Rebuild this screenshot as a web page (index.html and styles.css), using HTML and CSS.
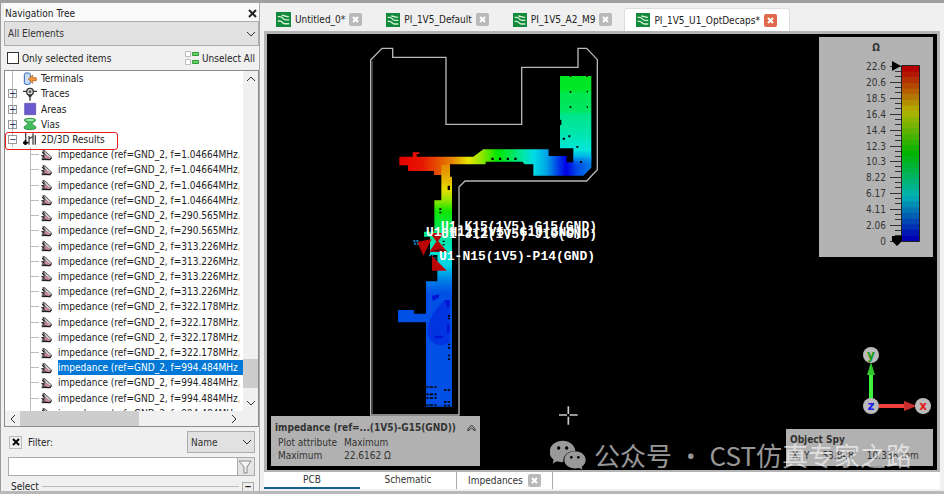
FILE: index.html
```
<!DOCTYPE html>
<html lang="en">
<head>
    <meta charset="UTF-8">
    <meta name="viewport" content="width=device-width, initial-scale=1.0">
    <title>PI_1V5_U1_OptDecaps</title>
    <link rel="stylesheet" href="styles.css">
</head>
<body>
    <!-- Shared icons -->
    <svg class="defs" width="0" height="0" aria-hidden="true">
        <symbol id="result" viewBox="0 0 36 36">
            <path d="M5 3l5 0 23 21-4 10-22-2-6-4 5-5-5-4 7-2-4-6z" fill="#5a5558"/>
            <path d="M8 5l22 19-2 3-13-9z" fill="#ddd"/>
            <path d="M11 17l16 9-2 5-14-5z" fill="#d487a8"/>
            <path d="M3 10l6 4M1 20l8 2M2 32h24l6-5" fill="none" stroke="#111" stroke-width="3"/>
        </symbol>
        <symbol id="doc" viewBox="0 0 42 42">
            <path d="M0 0h42v42H0z" fill="#128a3c"/>
            <path d="M5 13h6c8 0 8 9 15 9h11M5 25h5c8 0 8 8 15 8h12M16 9c8 0 9 4 20 4" fill="none" stroke="#d5f0d8" stroke-width="4"/>
        </symbol>
        <symbol id="cross" viewBox="0 0 13 13">
            <path d="M4 4l5 5M9 4l-5 5" stroke="#fff" stroke-width="2"/>
        </symbol>
        <symbol id="chevron" viewBox="0 0 10 10">
            <path d="M1 3l4 4 4-4" fill="none" stroke="currentColor"/>
        </symbol>
    </svg>

    <div class="app">
        <aside class="sidebar">
            <header class="panel-title">
                <span>Navigation Tree</span>
                <button class="plain" aria-label="Close panel"><svg width="9" height="9" viewBox="0 0 9 9"><path d="M1 1l7 7M8 1l-7 7" stroke="#222" stroke-width="2"/></svg></button>
            </header>
            <div class="select-wrap wide">
                <select aria-label="Elements"><option>All Elements</option></select>
                <svg width="10" height="10"><use href="#chevron"/></svg>
            </div>
            <div class="options">
                <label><input type="checkbox"> Only selected items</label>
                <button class="plain unselect">
                    <svg width="14" height="14" viewBox="0 0 14 14"><path d="M.5.5h5v5h-5zM.5 8.500h5v5h-5z" fill="#fff" stroke="#bbb"/><path d="M7.500 1.500h6v3h-6zM7.500 9.500h6v3h-6z" fill="#5fd35f" stroke="#2f9a3a"/></svg>
                    Unselect All
                </button>
            </div>

            <div class="tree-box">
                <div class="tree-view">
                    <ul class="tree">
                        <li class="node leaf"><i></i><svg width="14" height="14" viewBox="0 0 42 42"><rect x="4" y="3" width="18" height="34" rx="5" fill="#c9dcf5" stroke="#3565b5" stroke-width="3"/><path d="M40 17v9H29v8L16 21.500 29 9v8z" fill="#f0983c" stroke="#a85510" stroke-width="2"/></svg><span>Terminals</span></li>
                        <li class="node"><i>+</i><svg width="14" height="14" viewBox="0 0 42 42"><path d="M0 13h42M21 13v28M16 24l5 6 5-6" fill="none" stroke="#333" stroke-width="4"/><circle cx="21" cy="14" r="10" fill="#ddd" stroke="#333" stroke-width="4"/><circle cx="21" cy="14" r="4" fill="#555"/></svg><span>Traces</span></li>
                        <li class="node"><i>+</i><svg width="14" height="14" viewBox="0 0 42 42"><path d="M5 4h33v34H5z" fill="#6a5acd" stroke="#5346a8" stroke-width="2"/></svg><span>Areas</span></li>
                        <li class="node"><i>+</i><svg width="14" height="14" viewBox="0 0 42 42"><path d="M4 9C4 2 38 2 38 9c0 6-10 6-10 11s11 5 11 12c0 8-36 8-36 0 0-7 11-7 11-12S4 15 4 9z" fill="#42b95a" stroke="#217a35" stroke-width="2"/><ellipse cx="21" cy="9" rx="12" ry="3" fill="#a3e6ac"/></svg><span>Vias</span></li>
                        <li class="node marked"><i>−</i><svg width="14" height="14" viewBox="0 0 42 42"><path d="M8 3v35M18 12v26M30 4v34M37 10v28M2 32h14M18 20l12-6" fill="none" stroke="#444" stroke-width="4"/><path d="M0 29h14v6H0zM4 25h6v14H4z" fill="#000"/></svg><span>2D/3D Results</span></li>
                        <li class="item"><svg width="12" height="12"><use href="#result"/></svg><span>impedance (ref=GND_2, f=1.04664MHz<b>,</b></span></li>
                        <li class="item"><svg width="12" height="12"><use href="#result"/></svg><span>impedance (ref=GND_2, f=1.04664MHz<b>,</b></span></li>
                        <li class="item"><svg width="12" height="12"><use href="#result"/></svg><span>impedance (ref=GND_2, f=1.04664MHz<b>,</b></span></li>
                        <li class="item"><svg width="12" height="12"><use href="#result"/></svg><span>impedance (ref=GND_2, f=1.04664MHz<b>,</b></span></li>
                        <li class="item"><svg width="12" height="12"><use href="#result"/></svg><span>impedance (ref=GND_2, f=290.565MHz<b>,</b></span></li>
                        <li class="item"><svg width="12" height="12"><use href="#result"/></svg><span>impedance (ref=GND_2, f=290.565MHz<b>,</b></span></li>
                        <li class="item"><svg width="12" height="12"><use href="#result"/></svg><span>impedance (ref=GND_2, f=313.226MHz<b>,</b></span></li>
                        <li class="item"><svg width="12" height="12"><use href="#result"/></svg><span>impedance (ref=GND_2, f=313.226MHz<b>,</b></span></li>
                        <li class="item"><svg width="12" height="12"><use href="#result"/></svg><span>impedance (ref=GND_2, f=313.226MHz<b>,</b></span></li>
                        <li class="item"><svg width="12" height="12"><use href="#result"/></svg><span>impedance (ref=GND_2, f=313.226MHz<b>,</b></span></li>
                        <li class="item"><svg width="12" height="12"><use href="#result"/></svg><span>impedance (ref=GND_2, f=322.178MHz<b>,</b></span></li>
                        <li class="item"><svg width="12" height="12"><use href="#result"/></svg><span>impedance (ref=GND_2, f=322.178MHz<b>,</b></span></li>
                        <li class="item"><svg width="12" height="12"><use href="#result"/></svg><span>impedance (ref=GND_2, f=322.178MHz<b>,</b></span></li>
                        <li class="item"><svg width="12" height="12"><use href="#result"/></svg><span>impedance (ref=GND_2, f=322.178MHz<b>,</b></span></li>
                        <li class="item selected"><svg width="12" height="12"><use href="#result"/></svg><span>impedance (ref=GND_2, f=994.484MHz</span></li>
                        <li class="item"><svg width="12" height="12"><use href="#result"/></svg><span>impedance (ref=GND_2, f=994.484MHz<b>,</b></span></li>
                        <li class="item"><svg width="12" height="12"><use href="#result"/></svg><span>impedance (ref=GND_2, f=994.484MHz<b>,</b></span></li>
                        <li class="item"><svg width="12" height="12"><use href="#result"/></svg><span>impedance (ref=GND_2, f=994.484MHz<b>,</b></span></li>
                    </ul>
                </div>
                <div class="vbar">
                    <svg class="up" width="10" height="10"><use href="#chevron"/></svg>
                    <div class="thumb"></div>
                    <svg width="10" height="10"><use href="#chevron"/></svg>
                </div>
                <div class="hbar">
                    <svg class="left" width="10" height="10"><use href="#chevron"/></svg>
                    <div class="thumb"></div>
                    <svg class="right" width="10" height="10"><use href="#chevron"/></svg>
                </div>
            </div>

            <div class="filter-row">
                <button class="clear" aria-label="Clear filter"><svg width="8" height="8" viewBox="0 0 8 8"><path d="M1 1l6 6M7 1l-6 6" stroke="#000" stroke-width="2"/></svg></button>
                <label for="filter">Filter:</label>
                <div class="select-wrap">
                    <select aria-label="Filter by"><option>Name</option></select>
                    <svg width="10" height="10"><use href="#chevron"/></svg>
                </div>
            </div>
            <div class="filter-input">
                <input type="text" id="filter">
                <button aria-label="Apply filter"><svg width="14" height="14" viewBox="0 0 14 14"><path d="M1 1h12L9 7v6H6V7z" fill="#f4f4f4" stroke="#888"/></svg></button>
            </div>
            <div class="group"><span>Select</span><button aria-label="Collapse">−</button></div>
        </aside>

        <main class="main">
            <nav class="tabs">
                <div class="tab first"><svg width="15" height="15"><use href="#doc"/></svg><span>Untitled_0*</span><button class="close" aria-label="Close"><svg width="13" height="13"><use href="#cross"/></svg></button></div>
                <div class="tab"><svg width="14" height="14"><use href="#doc"/></svg><span>PI_1V5_Default</span><button class="close" aria-label="Close"><svg width="13" height="13"><use href="#cross"/></svg></button></div>
                <div class="tab"><svg width="14" height="14"><use href="#doc"/></svg><span>PI_1V5_A2_M9</span><button class="close" aria-label="Close"><svg width="13" height="13"><use href="#cross"/></svg></button></div>
                <div class="tab active"><svg width="14" height="14"><use href="#doc"/></svg><span>PI_1V5_U1_OptDecaps*</span><button class="close red" aria-label="Close"><svg width="13" height="13"><use href="#cross"/></svg></button></div>
            </nav>

            <section class="view">
                <svg class="board" viewBox="801 102 2010 1308" preserveAspectRatio="xMinYMin meet">
                    <defs>
                        <linearGradient id="gBar" gradientUnits="userSpaceOnUse" x1="118" y1="0" x2="694" y2="0">
                            <stop offset="0" stop-color="#e60000"/><stop offset=".12" stop-color="#e61800"/><stop offset=".2" stop-color="#e65000"/>
                            <stop offset=".27" stop-color="#e68000"/><stop offset=".36" stop-color="#e6e600"/><stop offset=".43" stop-color="#90e600"/>
                            <stop offset=".51" stop-color="#00e600"/><stop offset=".58" stop-color="#00e650"/><stop offset=".65" stop-color="#00e6b0"/>
                            <stop offset=".7" stop-color="#00dce6"/><stop offset=".77" stop-color="#00a0e6"/><stop offset=".83" stop-color="#0038e6"/>
                            <stop offset=".87" stop-color="#0000e6"/><stop offset=".92" stop-color="#0046e6"/><stop offset="1" stop-color="#0080e6"/>
                        </linearGradient>
                        <linearGradient id="gBlock" gradientUnits="userSpaceOnUse" x1="0" y1="108" x2="0" y2="376">
                            <stop offset="0" stop-color="#00e620"/><stop offset=".17" stop-color="#00e62c"/><stop offset=".19" stop-color="#00e650"/>
                            <stop offset=".38" stop-color="#00e660"/><stop offset=".44" stop-color="#00e68c"/><stop offset=".62" stop-color="#00e6a8"/>
                            <stop offset=".83" stop-color="#00e6dc"/><stop offset=".9" stop-color="#00b4e6"/><stop offset="1" stop-color="#0080e6" stop-opacity="0"/>
                        </linearGradient>
                        <linearGradient id="gTrunk" gradientUnits="userSpaceOnUse" x1="0" y1="60" x2="0" y2="460">
                            <stop offset="0" stop-color="#e67800"/><stop offset=".12" stop-color="#e6a800"/><stop offset=".22" stop-color="#e6dc00"/>
                            <stop offset=".3" stop-color="#96e600"/><stop offset=".38" stop-color="#14e600"/><stop offset=".48" stop-color="#00e63c"/>
                            <stop offset=".58" stop-color="#00e6a0"/><stop offset=".68" stop-color="#00e6c8"/><stop offset=".79" stop-color="#00d2e6"/>
                            <stop offset=".87" stop-color="#0096e6"/><stop offset=".93" stop-color="#0070e6"/><stop offset="1" stop-color="#0050e6"/>
                        </linearGradient>
                    </defs>

                    <!-- Board outline -->
                    <path d="M1112 180l34-35h32v27h160v201h227V202h169v-57h26l32 34v330l-32 34h-365l-18 18v684h-265z" fill="none" stroke="#b8b8b8" stroke-width="4"/>
                    <path d="M1117 183v1062" stroke="#777" stroke-width="2"/>

                    <!-- Supply net, coloured by impedance -->
                    <g transform="translate(1080 120)">
                        <path d="M118 350h40v-13h20v5h-8v8h170l30-22h196v20h54v19h20v-22h54v38l-24 24H520v-34h-26l-7-8H377v8H270v32h-48v-12h-78v-17h-26z" fill="url(#gBar)"/>
                        <path d="M600 108h94v268h-54v-51h-40z" fill="url(#gBlock)"/>
                        <path d="M629 108h5v3h-5zM679 108h5v3h-5zM629 153h5v5h-5zM680 153h4v4h-4zM629 199h5v5h-5zM680 199h4v4h-4zM599 239h5v16h-5zM608 293h7v6h-7zM625 286h6v6h-6zM649 318h6v5h-6zM660 363h6v6h-6zM394 353h7v7h-7zM417 353h7v7h-7zM440 353h7v7h-7zM463 353h7v7h-7z"/>
                    </g>
                    <g transform="translate(1170 420)">
                        <path d="M154 76l26-6v40h6v690h-78V547H24v-37h48v11h36v-97h34v-79h-22v-55h-18v-15h31v-94h21z" fill="url(#gTrunk)"/>
                        <path d="M164 480l15 0v126c-35 24-58 0-65-20-7-26 12-74 50-106z" fill="#0034e0"/>
                        <path d="M126 467l22-4-2 10-18 10zM171 553h8v25h-8zM134 587h23v8h-23zM164 480h15v22h-8z" fill="#0014d8"/>
                        <path d="M173 137h7v13h-7zM148 205h6v5h-6zM148 215h6v5h-6zM158 302h6v4h-6zM158 312h6v4h-6zM150 352h5v5h-5zM174 525h6v5h-6zM174 533h6v5h-6zM174 611h6v5h-6zM174 621h6v5h-6zM174 644h6v5h-6zM174 655h6v5h-6zM162 748h7v5h-7zM173 748h7v5h-7zM162 783h7v5h-7zM173 783h7v5h-7zM162 794h7v5h-7zM173 794h7v5h-7z"/>
                        <path d="M109 741h34M109 763h34M109 774h34M109 795h34" stroke="#000" stroke-width="5" stroke-dasharray="7 3 10 4"/>
                        <path d="M70 303h18M72 311h20M117 346h12M130 355h10" stroke="#0088cc" stroke-width="6" stroke-dasharray="6 3"/>
                        <path d="M82 306l43-9-25 50zM120 279h40l-18 29zM142 300l30 35h-54zM126 347l44 45h-44z" fill="#b80404"/>
                        <path d="M100 347l25-50-9 18zM118 335h54l-20-10z" fill="#700"/>
                        <g class="pins">
                            <text x="153" y="270">U1-K15(1V5)-G15(GND)</text>
                            <text x="108" y="288">U1-H12(1V5)-G10(GND)</text>
                            <text x="153" y="295">U1-J12(1V5)-J10(GND)</text>
                            <text x="147" y="360">U1-N15(1V5)-P14(GND)</text>
                        </g>
                    </g>

                    <!-- Cursor -->
                    <path d="M1705 1219v23M1705 1250v24M1677 1245h24M1709 1245h24" stroke="#ccc" stroke-width="5"/>
                </svg>

                <svg class="legend" id="legend" width="114" height="220" viewBox="0 0 114 220">
                    <text class="unit" x="57" y="14" text-anchor="middle">Ω</text>
                    <g id="bands"></g>
                    <path d="M82.500 28.500h18v176h-18z" fill="none" stroke="#222"/>
                    <g id="ticks"></g>
                    <path d="M73 24l9 5-9 5zM73 199h10v5l-5 5-5-5z" fill="#000"/>
                </svg>

                <div class="info">
                    <h2>impedance (ref=...(1V5)-G15(GND)) <svg width="9" height="9" viewBox="0 0 9 9"><path d="M1 5l3.500-4L8 5v2L4.500 4 1 7z" fill="none" stroke="#333"/></svg></h2>
                    <dl>
                        <dt>Plot attribute</dt><dd>Maximum</dd>
                        <dt>Maximum</dt><dd>22.6162 Ω</dd>
                    </dl>
                </div>

                <svg class="axes" width="68" height="68" viewBox="0 0 68 68">
                    <path d="M8 52V27" stroke="#3cf03c" stroke-width="4"/>
                    <path d="M4 28l4-13 4 13z" fill="#2fc52f"/>
                    <path d="M16 59h26" stroke="#f04040" stroke-width="4"/>
                    <path d="M41 54l13 5-13 5z" fill="#c83030"/>
                    <circle cx="8" cy="8" r="8"/><circle cx="8" cy="59" r="8"/><circle cx="60" cy="59" r="8"/>
                    <text x="8" y="12" fill="#129a12">y</text>
                    <text x="8" y="63" fill="#1c1cf0">z</text>
                    <text x="60" y="63" fill="#e81818">x</text>
                </svg>

                <div class="spy">
                    <h2>Object Spy</h2>
                    <p><span>X, Y</span><span>53.848</span><span>10.336 mm</span></p>
                </div>

                <div class="watermark">
                    <svg width="36" height="30" viewBox="0 0 108 90"><path d="M38 2c20 0 37 13 38 31-19-1-38 12-36 33-6 1-14 0-20-2L8 71l3-12C-14 39 2 2 38 2z" fill="#999"/><path d="M74 34c34 0 43 33 21 46l3 9-11-5c-24 5-44-6-44-24 0-15 14-26 31-26z" fill="#999"/><circle cx="26" cy="24" r="5"/><circle cx="50" cy="24" r="5"/><circle cx="64" cy="52" r="4"/><circle cx="85" cy="52" r="4"/></svg>
                    <span>公众号 · CST仿真专家之路</span>
                </div>
            </section>

            <nav class="views">
                <a href="#pcb" class="current">PCB</a>
                <a href="#schematic">Schematic</a>
                <div class="closable"><a href="#impedances">Impedances</a><button class="close" aria-label="Close"><svg width="13" height="13"><use href="#cross"/></svg></button></div>
            </nav>
        </main>
    </div>

    <script>
        const labels = ['22.6', '20.6', '18.5', '16.4', '14.4', '12.3', '10.3', '8.22', '6.17', '4.11', '2.06', '0'];
        const top0 = 29, barHeight = 175, count = 31;

        // Colour bands, red at the top to blue at the bottom
        let bands = '';
        for (let i = 0; i < count; i++) {
            const y = top0 + barHeight * i / count;
            bands += `<rect x="83" y="${y}" width="17" height="${barHeight / count + 0.5}" fill="hsl(${240 * i / (count - 1)}, 100%, 35%)"/>`;
        }
        document.getElementById('bands').innerHTML = bands;

        let ticks = '';
        labels.forEach((label, i) => {
            const y = Math.round(top0 + barHeight * i / 11);
            ticks += `<text x="67" y="${y + 4}" text-anchor="end">${label}</text><path d="M71 ${y}.5h11"/>`;
            if (i < 11) {
                ticks += `<path d="M76 ${y + 5}.5h6M76 ${y + 10}.5h6"/>`;
            }
        });
        document.getElementById('ticks').innerHTML = ticks;
    </script>
</body>
</html>
```

FILE: styles.css
```
* {
    box-sizing: border-box;
}
body {
    margin: 0;
    background: #f0f0f0;
    color: #222;
    font-family: "DejaVu Sans Condensed", "DejaVu Sans", sans-serif;
    font-size: 10px;
    line-height: 15px;
}
button, select, input {
    font: inherit;
    color: inherit;
    margin: 0;
    padding: 0;
}
svg {
    display: block;
    flex: none;
}
h2, p, dl, dd, ul {
    margin: 0;
    padding: 0;
}
.defs {
    position: absolute;
}
.app {
    display: flex;
    height: 100vh;
    overflow: hidden;
    border-top: 3px solid #a0a0a0;
    border-bottom: 3px solid #b8b8b8;
}

/* Sidebar */
.sidebar {
    display: flex;
    flex-direction: column;
    width: 260px;
    padding-left: 3px;
    border-left: 1px solid #999;
    border-right: 1px solid #aaa;
    overflow: hidden;
}
.panel-title {
    display: flex;
    justify-content: space-between;
    align-items: center;
    height: 18px;
    padding: 2px 2px 0 1px;
    background: #fafafa;
}
.plain {
    display: flex;
    align-items: center;
    gap: 3px;
    border: 0;
    background: none;
}
.select-wrap {
    position: relative;
    color: #333;
}
.select-wrap select {
    appearance: none;
    width: 100%;
    height: 100%;
    padding: 0 3px;
    border: 1px solid #adadad;
    border-radius: 0;
    background: #e1e1e1;
}
.select-wrap svg {
    position: absolute;
    right: 3px;
    top: 50%;
    margin-top: -5px;
    pointer-events: none;
}
.select-wrap.wide {
    height: 25px;
}
.options {
    display: flex;
    justify-content: space-between;
    align-items: center;
    height: 24px;
    padding: 0 4px 0 3px;
}
.options label {
    display: flex;
    align-items: center;
    gap: 3px;
}
.options input {
    appearance: none;
    width: 12px;
    height: 12px;
    border: 1px solid #333;
    background: #fff;
}
.tree-box {
    flex: 1;
    min-height: 0;
    display: grid;
    grid-template-columns: 1fr 15px;
    grid-template-rows: 1fr 15px;
    border: 1px solid #8c8c8c;
    background: #fff;
}
.tree-view {
    overflow: hidden;
    min-height: 0;
    min-width: 0;
}
.tree {
    position: relative;
    display: flex;
    flex-direction: column;
    height: 350px;
    list-style: none;
}
.tree li {
    flex: 1;
    display: flex;
    align-items: center;
    white-space: nowrap;
}
.node {
    position: relative;
    padding-left: 3px;
    background: linear-gradient(#bbb, #bbb) 7px 0 / 1px 100% no-repeat;
}
.node i {
    width: 9px;
    height: 9px;
    margin-right: 6px;
    border: 1px solid #999;
    background: #fff;
    color: #235;
    font-style: normal;
    line-height: 7px;
    text-align: center;
}
.node.leaf i {
    visibility: hidden;
}
.node span {
    margin-left: 4px;
}
.node.marked::after {
    content: "";
    position: absolute;
    left: 0;
    top: 0;
    width: 111px;
    height: 16px;
    border: 1px solid #e81c1c;
    border-radius: 3px;
}
.item {
    padding-left: 36px;
    background:
        linear-gradient(#bbb, #bbb) 25px 0 / 1px 100% no-repeat,
        linear-gradient(#bbb, #bbb) 25px 50% / 9px 1px no-repeat;
}
.item span {
    margin-left: 5px;
}
.item b {
    color: #e8a050;
    font-weight: normal;
}
.item.selected span {
    flex: 1;
    background: #0078d7;
    color: #fff;
}
.vbar, .hbar {
    display: flex;
    align-items: center;
    background: #f0f0f0;
    color: #333;
}
.vbar {
    flex-direction: column;
    padding: 3px 0;
}
.hbar {
    grid-column: 1 / 3;
    padding: 0 3px;
}
.vbar .thumb {
    width: 100%;
    height: 29px;
    margin: auto 0 10px;
    background: #cdcdcd;
}
.hbar .thumb {
    width: 119px;
    height: 100%;
    margin: 0 auto 0 2px;
    background: #cdcdcd;
}
.up {
    transform: rotate(180deg);
}
.left {
    transform: rotate(90deg);
}
.right {
    transform: rotate(-90deg);
}
.hbar .right {
    margin-right: 16px;
}
.filter-row {
    display: flex;
    align-items: center;
    gap: 6px;
    padding: 4px 4px 4px 5px;
}
.filter-row .select-wrap {
    width: 68px;
    height: 22px;
    margin-left: auto;
}
.clear {
    display: grid;
    place-items: center;
    width: 13px;
    height: 13px;
    border: 1px solid #bbb;
    background: #eee;
}
.filter-input {
    display: flex;
    flex: none;
    height: 19px;
    margin: 0 4px 6px;
    border: 1px solid #aaa;
    background: #fff;
}
.filter-input input {
    flex: 1;
    min-width: 0;
    border: 0;
}
.filter-input button {
    width: 17px;
    border: 0;
    border-left: 1px solid #aaa;
    background: #e4e4e4;
}
.group {
    display: flex;
    flex: none;
    align-items: center;
    gap: 3px;
    height: 9px;
    padding-left: 7px;
}
.group::before {
    order: 1;
    content: "";
    flex: 1;
    height: 1px;
    background: #bbb;
}
.group button {
    order: 2;
    width: 12px;
    height: 10px;
    margin-right: 5px;
    border: 1px solid #aaa;
    background: #eee;
    font-weight: bold;
    line-height: 8px;
}

/* Main area */
.main {
    flex: 1;
    display: flex;
    flex-direction: column;
    min-width: 0;
    padding: 0 4px 2px;
}
.tabs {
    display: flex;
    align-items: flex-end;
    height: 28px;
}
.tab {
    display: flex;
    align-items: center;
    gap: 4px;
    height: 23px;
    padding: 0 12px;
}
.tab.first {
    height: 24px;
}
.tab.active {
    padding: 0 12px 0 11px;
    border: 1px solid #ddd;
    border-bottom: 0;
    border-radius: 3px 3px 0 0;
    background: #fff;
}
.close {
    width: 13px;
    height: 13px;
    border: 0;
    border-radius: 2px;
    background: #b9b9b9;
}
.close.red {
    background: #e0694c;
}
.view {
    position: relative;
    flex: 1;
    min-height: 0;
    border: 3px solid #b4b4b4;
    border-bottom-width: 2px;
    background: #000;
    overflow: hidden;
}
.board {
    width: 100%;
    height: 100%;
}
.pins {
    fill: #fff;
    font: bold 39px "Liberation Mono", monospace;
}
.legend {
    position: absolute;
    top: 3px;
    right: 4px;
    background: #b3b3b3;
    fill: #333;
    font-size: 10px;
}
.legend .unit {
    font-weight: bold;
}
#ticks path {
    stroke: #333;
}
.info, .spy {
    position: absolute;
    bottom: 4px;
    background: #b1b1b1;
    color: #333;
}
.info {
    left: 4px;
    width: 209px;
    padding: 4px;
}
.info h2, .spy h2 {
    display: flex;
    justify-content: space-between;
    align-items: center;
    font-size: 10px;
    line-height: 16px;
}
.info dl {
    display: grid;
    grid-template-columns: 66px 1fr;
    padding-left: 3px;
    line-height: 13px;
}
.axes {
    position: absolute;
    right: 6px;
    bottom: 55px;
    font: bold 12px "DejaVu Sans", sans-serif;
    text-anchor: middle;
}
.axes circle {
    fill: #bbb;
}
.spy {
    right: 4px;
    width: 147px;
    padding: 3px 4px;
}
.spy p {
    display: flex;
    gap: 13px;
    padding-left: 2px;
}
.watermark {
    position: absolute;
    right: 25px;
    bottom: 0;
    display: flex;
    align-items: center;
    gap: 8px;
    color: rgba(255, 255, 255, 0.6);
    font: 26px "Noto Sans CJK SC", sans-serif;
    line-height: 30px;
    white-space: nowrap;
}
.views {
    display: flex;
    height: 17px;
    background: #fff;
    text-align: center;
}
.views a {
    width: 96px;
    color: #333;
    text-decoration: none;
}
.views .current {
    border-bottom: 2px solid #16608f;
}
.closable {
    display: flex;
    align-items: center;
    gap: 5px;
    padding: 0 11px;
    border: solid #aaa;
    border-width: 0 1px;
}
.closable a {
    width: auto;
}
```
